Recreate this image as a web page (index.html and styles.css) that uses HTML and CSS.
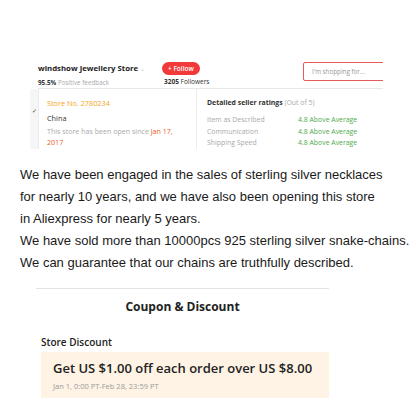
FILE: index.html
```html
<!DOCTYPE html>
<html lang="en">
<head>
    <meta charset="UTF-8">
    <meta name="viewport" content="width=device-width, initial-scale=1.0">
    <title>windshow Jewellery Store</title>
    <link rel="stylesheet" href="styles.css">
</head>
<body>

<div class="store">
    <div class="store-head">
        <div class="store-info">
            <div class="store-name">windshow Jewellery Store <span class="caret">&#8964;</span></div>
            <div class="feedback"><b>95.5%</b> Positive feedback</div>
        </div>
        <div class="follow">
            <div class="follow-btn">+ Follow</div>
            <div class="followers"><b>3205</b> Followers</div>
        </div>
        <div class="search">I'm shopping for...</div>
    </div>

    <div class="store-body">
        <div class="side">&#10003;</div>
        <div class="panel">
            <div class="panel-left">
                <div class="store-no">Store No. 2780234</div>
                <div class="country">China</div>
                <div class="opened">This store has been open since <span class="date">Jan 17,</span></div>
                <div class="opened date">2017</div>
            </div>
            <div class="panel-right">
                <div class="ratings-title"><b>Detailed seller ratings</b> (Out of 5)</div>
                <div class="rating"><span class="label">Item as Described</span><span class="value">4.8 Above Average</span></div>
                <div class="rating"><span class="label">Communication</span><span class="value">4.8 Above Average</span></div>
                <div class="rating"><span class="label">Shipping Speed</span><span class="value">4.8 Above Average</span></div>
            </div>
        </div>
    </div>
</div>

<div class="about">
    We have been engaged in the sales of sterling silver necklaces<br>
    for nearly 10 years, and we have also been opening this store<br>
    in Aliexpress for nearly 5 years.<br>
    We have sold more than 10000pcs 925 sterling silver snake-chains.<br>
    We can guarantee that our chains are truthfully described.
</div>

<div class="coupons">
    <div class="coupons-title">Coupon &amp; Discount</div>
    <div class="discount-label">Store Discount</div>
    <div class="discount">
        <div class="discount-text">Get US $1.00 off each order over US $8.00</div>
        <div class="discount-time">Jan 1, 0:00 PT-Feb 28, 23:59 PT</div>
    </div>
</div>

</body>
</html>
```

FILE: styles.css
```css
body {
    margin: 0;
    padding: 0;
    background: #fff;
    font-family: 'Open Sans', sans-serif;
    color: #333;
}

/* store header block */
.store {
    margin: 57px 0 0 30px;
    width: 353px;
    overflow: hidden;
}

.store-head {
    display: flex;
    align-items: flex-start;
    margin-left: 8px;
    height: 31px;
    border-bottom: 1px solid #e8e8e8;
}

.store-info {
    width: 124px;
    padding-top: 6px;
}

.store-name {
    font-size: 7.8px;
    font-weight: bold;
    color: #222;
    line-height: 11px;
}

.caret {
    font-weight: normal;
    color: #bbb;
    font-size: 6px;
}

.feedback {
    font-size: 6.3px;
    color: #aaa;
    line-height: 9px;
    margin-top: 3px;
}

.feedback b {
    color: #333;
}

.follow {
    padding-top: 5px;
}

.follow-btn {
    width: fit-content;
    background: #f23a3a;
    color: #fff;
    font-size: 6.5px;
    font-weight: 600;
    height: 13px;
    line-height: 13px;
    padding: 0 6px;
    border-radius: 7px;
}

.followers {
    font-size: 6.5px;
    line-height: 9px;
    margin: 2px 0 0 2px;
    color: #333;
}

.search {
    flex-shrink: 0;
    margin-left: auto;
    margin-top: 5px;
    margin-right: -30px;
    width: 100px;
    height: 17px;
    line-height: 17px;
    padding-left: 8px;
    border: 1px solid #e95a5a;
    border-radius: 2px;
    font-size: 6.3px;
    color: #999;
}

.store-body {
    display: flex;
}

.side {
    width: 8px;
    background: #f6f6f6;
    font-size: 6px;
    color: #444;
    padding-top: 18px;
    text-align: center;
}

.panel {
    flex: 1;
    display: flex;
    height: 60px;
    border-left: 1px solid #ececec;
}

.panel-left {
    width: 138px;
    padding: 9px 11px 0 8px;
    border-right: 1px solid #ededed;
    font-size: 7px;
    line-height: 10px;
}

.store-no {
    color: #f5a623;
    font-size: 7.3px;
}

.country {
    color: #333;
    margin-top: 5px;
    font-size: 7.3px;
}

.opened {
    color: #aaa;
    font-size: 7.1px;
    line-height: 10.5px;
}

.country + .opened {
    margin-top: 3px;
}

.date {
    color: #e8622a;
}

.panel-right {
    padding: 9px 0 0 10px;
    font-size: 6.9px;
    line-height: 10px;
}

.ratings-title {
    color: #aaa;
    margin-bottom: 6px;
}

.ratings-title b {
    color: #333;
}

.rating {
    display: flex;
    line-height: 11.7px;
}

.rating .label {
    width: 91px;
    color: #aaa;
}

.rating .value {
    color: #4caa4c;
}

/* about text */
.about {
    font-family: 'Liberation Sans', Arial, sans-serif;
    font-size: 13px;
    line-height: 22px;
    color: #1a1a1a;
    margin: 15px 0 0 20px;
}

/* coupons */
.coupons {
    margin: 14px 0 0 36px;
    width: 293px;
    border-top: 1px solid #e4e4e4;
}

.coupons-title {
    text-align: center;
    font-size: 12px;
    font-weight: bold;
    line-height: 16px;
    color: #222;
    padding-top: 10px;
}

.discount-label {
    margin: 21px 0 0 5px;
    font-size: 10px;
    font-weight: 600;
    line-height: 12px;
    color: #222;
}

.discount {
    margin: 4px 0 0 5px;
    background: #fff3e5;
    padding: 8px 0 7px 12px;
}

.discount-text {
    font-size: 13px;
    font-weight: 600;
    line-height: 17px;
    color: #222;
}

.discount-time {
    font-size: 7.5px;
    line-height: 10px;
    margin-top: 4px;
    color: #999;
}
```
